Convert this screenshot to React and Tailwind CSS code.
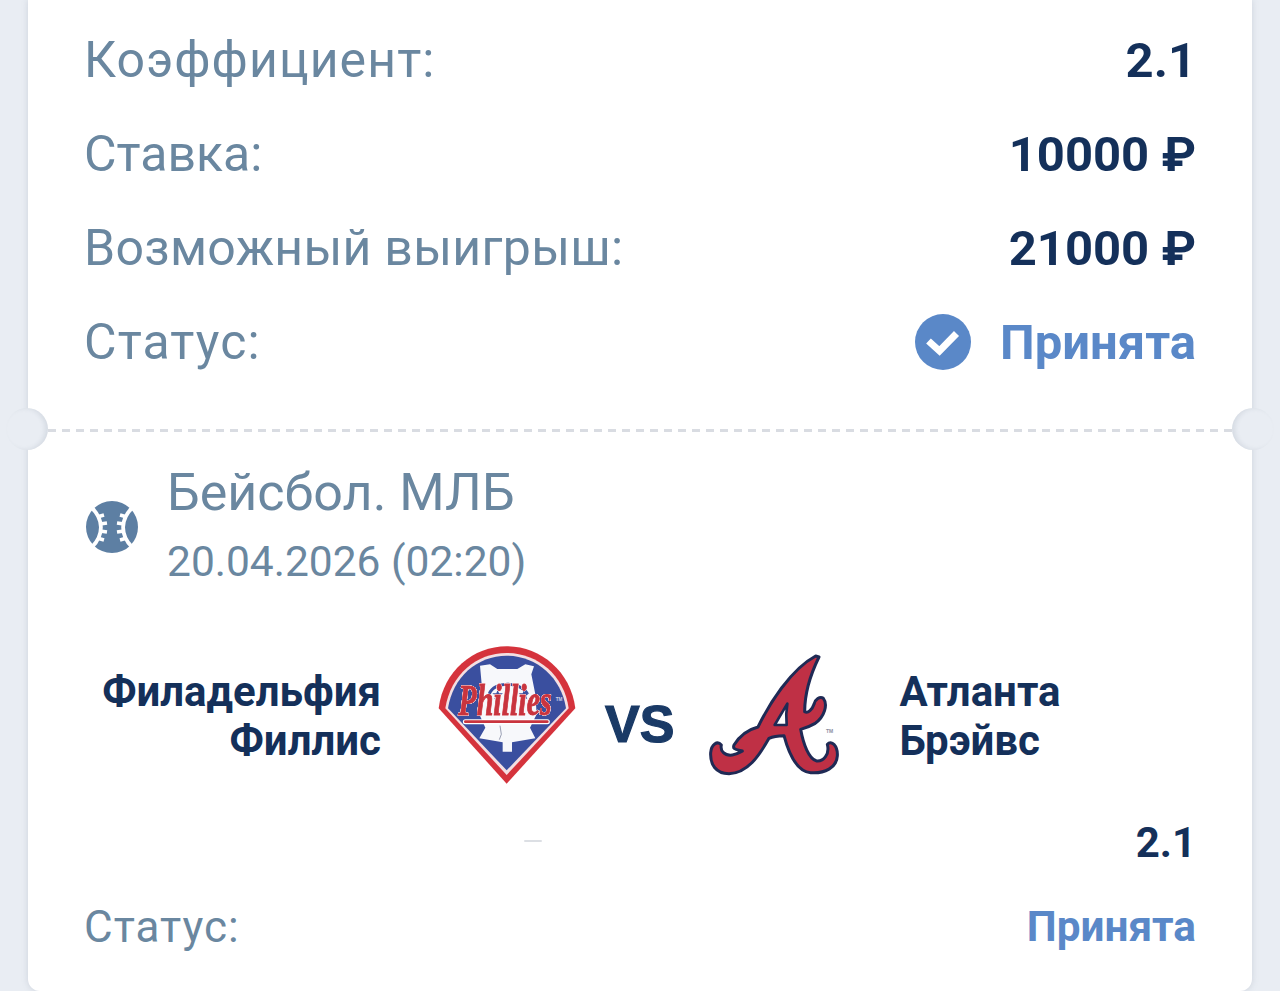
import React from "react";

function Row({ label, labelClass, children }) {
  return (
    <div className="flex h-[94px] items-center justify-between">
      <span className={"text-[50px] leading-none text-[#6a87a0] " + labelClass}>{label}</span>
      {children}
    </div>
  );
}

function Value({ children }) {
  return <span className="text-[49px] font-bold leading-none text-[#14305a]">{children}</span>;
}

function Notch({ side }) {
  return (
    <div
      className={
        "absolute top-[-21px] h-[42px] w-[42px] rounded-full bg-[#e9edf3] " +
        (side === "left" ? "left-[-22px] shadow-[inset_-3px_0_4px_rgba(120,130,150,0.16)]" : "right-[-22px] shadow-[inset_3px_0_4px_rgba(120,130,150,0.16)]")
      }
    />
  );
}

function Baseball() {
  return (
    <svg width="54" height="54" viewBox="0 0 54 54" className="mt-[3px] shrink-0">
      <circle cx="27" cy="27" r="26" fill="#5d7fa3" />
      <g fill="none" stroke="#ffffff" strokeLinecap="butt">
        <path d="M6 7 C19 19 19 35 7 47" strokeWidth="3.8" />
        <path d="M48 7 C35 19 35 35 47 47" strokeWidth="3.8" />
        <path d="M12 17 L19 15 M15 24 L22 23 M15 31 L22 32 M12 38 L19 40" strokeWidth="3.6" />
        <path d="M42 17 L35 15 M39 24 L32 23 M39 31 L32 32 M42 38 L35 40" strokeWidth="3.6" />
      </g>
    </svg>
  );
}

function Phillies() {
  return (
    <svg width="180" height="170" viewBox="0 0 540 510" className="shrink-0">
      <path d="M260 458 L56 232 C70 120 160 46 260 46 C360 46 452 120 466 232 Z" fill="#d5333c" />
      <path d="M260 432 L76 232 C92 130 170 66 260 66 C350 66 432 130 446 232 Z" fill="#f3dfe2" />
      <path d="M260 418 L84 232 C98 138 172 74 260 74 C348 74 424 138 438 232 Z" fill="#3a4f9f" />
      <path d="M180 104 L210 100 L232 114 L292 114 L316 100 L342 106 L334 130 L346 190 L350 250 L330 290 L346 322 L276 334 L276 362 L248 362 L248 334 L178 322 L196 290 L178 250 L186 170 Z" fill="#f7f8fb" />
      <path d="M208 188 C222 150 300 150 322 188" fill="none" stroke="#3a4f9f" strokeWidth="9" />
      <path d="M240 284 L244 310 L238 326" fill="none" stroke="#6a7190" strokeWidth="2" />
      <polygon points="233,176 237,187 249,187 239,194 243,205 233,198 223,205 227,194 217,187 229,187" fill="#3a4f9f" />
      <polygon points="312,176 316,187 328,187 318,194 322,205 312,198 302,205 306,194 296,187 308,187" fill="#3a4f9f" />
      <text
        x="255"
        y="252"
        textAnchor="middle"
        fontSize="132"
        textLength="280"
        lengthAdjust="spacingAndGlyphs"
        fontStyle="italic"
        fontWeight="700"
        fontFamily="'Liberation Serif', serif"
        fill="#c9343e"
        stroke="#c9343e"
        strokeWidth="3"
        style={{ filter: "drop-shadow(0 0 1.5px #fff) drop-shadow(0 0 1.5px #fff) drop-shadow(0 0 1px #fff)" }}
      >
        Phillies
      </text>
      <path d="M136 272 L382 272" stroke="#ffffff" strokeWidth="15" strokeLinecap="round" />
      <path d="M136 272 L382 272" stroke="#c9343e" strokeWidth="8" strokeLinecap="round" />
      <text x="417" y="209" fontSize="14" fontWeight="700" fill="#c9d1e8" textAnchor="middle" fontFamily="'Liberation Sans', sans-serif">TM</text>
    </svg>
  );
}

function Braves() {
  return (
    <svg width="150" height="142" viewBox="310 30 450 426" className="shrink-0">
      <path
        d="M655 48 C632 95 612 150 612 212 C622 218 635 205 640 190 C643 175 658 165 668 172 C682 190 672 228 642 248 C625 258 612 262 600 265 C608 310 625 355 648 360 C668 362 688 340 680 310 C692 295 712 315 710 345 C708 380 672 398 630 395 C590 392 565 340 550 284 C530 284 515 287 505 292 C475 345 440 397 385 398 C345 398 328 370 330 335 C332 310 350 298 362 312 C358 330 372 345 395 342 C410 340 420 332 425 330 C405 325 395 325 400 312 C420 280 445 265 472 258 C505 190 570 85 645 45 Z"
        fill="#bf3045"
        stroke="#1f2a55"
        strokeWidth="9"
        strokeLinejoin="round"
      />
      <path d="M522 252 L560 188 C556 210 556 232 558 252 Z" fill="#ffffff" stroke="#1f2a55" strokeWidth="8" strokeLinejoin="round" />
      <text x="687" y="275" fontSize="15" fontWeight="700" fill="#8a8f9f" textAnchor="middle" fontFamily="'Liberation Sans', sans-serif">TM</text>
    </svg>
  );
}

export default function App() {
  return (
    <div className="h-[991px] w-[1280px] overflow-hidden bg-[#e9edf3] px-[28px] font-['Roboto',sans-serif]">
      <div className="h-[991px] w-[1224px] rounded-b-[12px] bg-white shadow-[0_0_6px_rgba(120,130,150,0.25)]">
        <div className="h-[429px] px-[56px] pt-[13px]">
          <Row label="Коэффициент:" labelClass="tracking-[1.1px]">
            <Value>2.1</Value>
          </Row>
          <Row label="Ставка:" labelClass="">
            <Value>10000 ₽</Value>
          </Row>
          <Row label="Возможный выигрыш:" labelClass="tracking-[0.3px]">
            <Value>21000 ₽</Value>
          </Row>
          <Row label="Статус:" labelClass="tracking-[1.1px]">
            <div className="flex items-center gap-[29px]">
              <svg width="56" height="56" viewBox="0 0 56 56">
                <circle cx="28" cy="28" r="28" fill="#5a88c8" />
                <path d="M13.5 27 L24.5 37 L41.5 19.5" fill="none" stroke="#ffffff" strokeWidth="7" />
              </svg>
              <span className="text-[49px] font-bold leading-none text-[#5a88c8]">Принята</span>
            </div>
          </Row>
        </div>
        <div className="relative h-[3px]">
          <div className="mx-[20px] h-[3px] bg-[repeating-linear-gradient(90deg,#d9dce2_0_8px,transparent_8px_14px)]" />
          <Notch side="left" />
          <Notch side="right" />
        </div>
        <div className="flex h-[180px] items-center gap-[28px] pl-[57px] pt-[7px]">
          <Baseball />
          <div className="flex flex-col gap-[22px]">
            <span className="text-[52px] leading-none text-[#6a87a0]">Бейсбол. МЛБ</span>
            <span className="text-[42.5px] leading-none text-[#6a87a0]">20.04.2026 (02:20)</span>
          </div>
        </div>
        <div className="flex h-[207px] items-center">
          <div className="w-[353px] text-right text-[42px] font-bold leading-[49px] text-[#14305a]">
            Филадельфия
            <br />
            Филлис
          </div>
          <div className="ml-[39px] h-[170px] w-[180px]">
            <Phillies />
          </div>
          <span className="ml-[5px] mt-[16px] font-['Liberation_Sans',sans-serif] text-[52px] font-bold leading-none text-[#1a3a66] [-webkit-text-stroke:1.2px_#1a3a66]">VS</span>
          <div className="ml-[30px] mt-[12px]">
            <Braves />
          </div>
          <div className="ml-[45px] text-[42px] font-bold leading-[49px] text-[#14305a]">
            Атланта
            <br />
            Брэйвс
          </div>
        </div>
        <div className="flex h-[47px] items-center justify-between px-[56px]">
          <span className="ml-[440px] mt-[-4px] h-[2px] w-[18px] rounded-full bg-[#dcdfe4]" />
          <span className="text-[42px] font-bold leading-none text-[#14305a]">2.1</span>
        </div>
        <div className="flex h-[121px] items-center justify-between px-[56px]">
          <span className="text-[44px] leading-none tracking-[1px] text-[#6a87a0]">Статус:</span>
          <span className="mt-[2px] text-[42.3px] font-bold leading-none text-[#5a88c8]">Принята</span>
        </div>
      </div>
    </div>
  );
}
